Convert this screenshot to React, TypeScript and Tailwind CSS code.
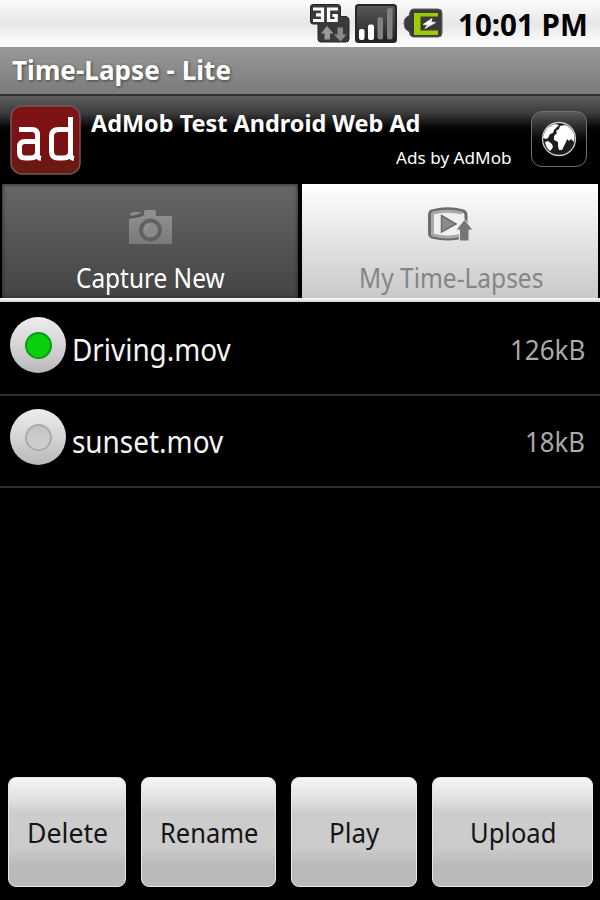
import { useLayoutEffect, useRef, useState } from "react";

type FitTextProps = {
  text: string;
  width: number;
  className?: string;
};

// Condenses a single line of text so that it fills the given width
function FitText({ text, width, className = "" }: FitTextProps) {
  const ref = useRef<HTMLSpanElement>(null);
  const [scale, setScale] = useState(1);

  useLayoutEffect(() => {
    if (ref.current) setScale(width / ref.current.offsetWidth);
  }, [text, width]);

  return (
    <span className={`flex shrink-0 ${className}`} style={{ width }}>
      <span
        ref={ref}
        className="inline-block shrink-0 origin-left whitespace-nowrap"
        style={{ transform: `scaleX(${scale})` }}
      >
        {text}
      </span>
    </span>
  );
}

const files = [
  { name: "Driving.mov", nameWidth: 159, size: "126kB", sizeWidth: 75, selected: true },
  { name: "sunset.mov", nameWidth: 151, size: "18kB", sizeWidth: 60, selected: false },
];

const actions = [
  { label: "Delete", textWidth: 81, box: "w-[118px]" },
  { label: "Rename", textWidth: 98, box: "w-[135px]" },
  { label: "Play", textWidth: 50, box: "w-[126px]" },
  { label: "Upload", textWidth: 86, box: "w-[161px]" },
];

function NetworkIcon() {
  return (
    <svg width="40" height="40" viewBox="0 0 40 40">
      <path
        d="M3 0.500H28Q30 0.500 30.500 3V12.500H36Q39 13 39 16V35Q39 38 36 38H11Q8 38 8 35V20H3Q0.500 20 0.500 17V3Q0.500 0.500 3 0.500Z"
        fill="#3a3a3a"
        stroke="#262626"
      />
      <path d="M3 5H12.500V16.500H3M6 10.800H12" fill="none" stroke="#fff" strokeWidth="3.200" />
      <path d="M28 5H18.500V16.500H26.200V11.500H22.500" fill="none" stroke="#fff" strokeWidth="3.200" />
      <path d="M17 22L23.500 29.500H20V35.500H14.500V29.500H11Z" fill="#9a9a9a" />
      <path d="M30.500 37.500L24 30.500H27.500V23.500H33V30.500H36.500Z" fill="#8a8a8a" />
    </svg>
  );
}

function SignalIcon() {
  return (
    <svg width="42" height="39" viewBox="0 0 42 39">
      <defs>
        <linearGradient id="signal" x1="0" y1="0" x2="0" y2="1">
          <stop offset="0" stopColor="#5a5a5a" />
          <stop offset="1" stopColor="#202020" />
        </linearGradient>
      </defs>
      <rect x="1" y="1" width="40" height="37" rx="2.500" fill="url(#signal)" stroke="#262626" strokeWidth="2" />
      <rect x="4" y="25" width="5.500" height="11" rx="2" fill="#fff" />
      <rect x="13" y="20.500" width="6" height="15.500" rx="2" fill="#fff" />
      <rect x="22.500" y="13" width="5.500" height="22.500" rx="2.500" fill="#818181" />
      <rect x="32" y="4" width="5.500" height="31.500" rx="2.500" fill="#818181" />
    </svg>
  );
}

function BatteryIcon() {
  return (
    <svg width="41" height="31" viewBox="0 0 41 31">
      <path
        d="M10 1H35Q39 1 39 5V25Q39 29 35 29H10Q7 29 6 23.500L3.500 22Q1 20 1 15Q1 11 3.500 9L6 8Q7 1 10 1Z"
        fill="#3a3a3a"
        stroke="#606060"
      />
      <path d="M11 5H35V8.500H17.500V22.500H35V27H11Z" fill="#9bcc08" />
      <path d="M29 10.500L20 16.500L24.500 17L22 20.500L32.500 14.500L28 14Z" fill="#fff" stroke="#ddd" strokeWidth="1" />
    </svg>
  );
}

function AdLogo() {
  return (
    <svg width="72" height="72" viewBox="0 0 72 72">
      <defs>
        <linearGradient id="adred" x1="0" y1="0" x2="0" y2="1">
          <stop offset="0" stopColor="#7c1416" />
          <stop offset="0.500" stopColor="#7d1114" />
          <stop offset="0.800" stopColor="#701414" />
          <stop offset="1" stopColor="#642012" />
        </linearGradient>
      </defs>
      <rect x="1" y="1" width="69" height="68" rx="11" fill="url(#adred)" stroke="#77554f" strokeWidth="1.500" />
      <g fill="none" stroke="#fff" strokeWidth="5">
        <path d="M9 24.500H22Q27.500 24.500 27.500 30V50Q27.500 53 31 53.500M27.500 36.500H15Q9.500 36.500 9.500 42V47.500Q9.500 53 15 53H20Q27.500 53 27.500 47" />
        <path d="M60.500 12V50Q60.500 53 64 53.500M60.500 24.500H49Q41.500 24.500 41.500 31V46.500Q41.500 53 48 53H53Q60.500 53 60.500 47" />
      </g>
    </svg>
  );
}

function GlobeIcon() {
  return (
    <svg width="36" height="36" viewBox="0 0 36 36">
      <circle cx="18" cy="18" r="16.500" fill="#1c1c1c" stroke="#ccc" strokeWidth="1.300" />
      <path d="M3 13Q6 5 14 3L18 4L15 7L13 9L12 12L9 13L7 17L5 18L2 17Z" fill="#fff" />
      <path d="M4 21L7 20L11 23L12 26L10 29L9 30Q5 27 4 21Z" fill="#fff" />
      <path
        d="M19 5L24 4Q30 6 33 13Q34 17 33 21L30 18L28 20L26 18L25 21L23 25L21 29H18L17 25V21L13 19V15L16 12L15 10L18 8Z"
        fill="#fff"
      />
    </svg>
  );
}

function CameraIcon() {
  return (
    <svg width="46" height="38" viewBox="0 0 46 38">
      <defs>
        <linearGradient id="camera" x1="0" y1="0" x2="0" y2="1">
          <stop offset="0" stopColor="#929292" />
          <stop offset="1" stopColor="#7a7a7a" />
        </linearGradient>
      </defs>
      <path d="M1 10L12 8L16 6.500V3Q16 1 18 1H26Q28 1 28 3V7H44V35H1Z" fill="url(#camera)" />
      <path d="M2 5L5 3H13L11 5L3 7Z" fill="#8c8c8c" />
      <path d="M2 8.500L13 6.500" stroke="#555" strokeWidth="1.300" />
      <circle cx="22.500" cy="21" r="9.500" fill="#8a8a8a" stroke="#606060" strokeWidth="3.800" />
      <path d="M17.500 22A5 5 0 0 1 22.500 16" fill="none" stroke="#969696" strokeWidth="2" />
    </svg>
  );
}

function UploadVideoIcon() {
  return (
    <svg width="46" height="37" viewBox="0 0 46 37">
      <path
        d="M4 5Q20 0.500 35 5Q38 6 38 9V27Q38 30 35 31Q20 35 4 31Q1.500 30 1.500 27V9Q1.500 6 4 5Z"
        fill="#f0f0f0"
        stroke="#6c6c6c"
        strokeWidth="3"
      />
      <path d="M34 7Q19 3.500 5 7Q4.500 8 4.500 10V26Q4.500 28 5 29Q19 32.500 32 29.500" fill="none" stroke="#aaa" strokeWidth="3" />
      <path d="M13.500 9.500L28 18L13.500 26Z" fill="#8c8c8c" stroke="#6c6c6c" strokeWidth="1.500" />
      <path d="M36.500 13.500L45 24H41V35H31.500V24H28Z" fill="#757575" stroke="#e8e8e8" />
    </svg>
  );
}

function Radio({ selected }: { selected: boolean }) {
  return (
    <span className="flex size-14 items-center justify-center rounded-full bg-linear-to-b from-[#ededed] via-[#d5d5d5] to-[#b8b8b8]">
      {selected ? (
        <span className="size-[27px] rounded-full border-2 border-[#0a9a14] bg-[#08d00d]" />
      ) : (
        <span className="size-[27px] rounded-full border-2 border-[#ababab] bg-linear-to-b from-[#c4c4c4] to-[#d0d0d0]" />
      )}
    </span>
  );
}

export default function App() {
  return (
    <div
      className="flex h-[900px] w-[600px] flex-col overflow-hidden bg-black"
      style={{ fontFamily: '"Noto Sans", "Open Sans", sans-serif' }}
    >
      {/* Status bar */}
      <header className="flex h-[47px] shrink-0 items-start justify-end bg-linear-to-b from-[#fbfbfb] via-[#e7e7e7] to-[#fff] pr-3">
        <div className="mt-1 mr-[5px]">
          <NetworkIcon />
        </div>
        <div className="mt-1 mr-[6px]">
          <SignalIcon />
        </div>
        <div className="mt-2 mr-[14px]">
          <BatteryIcon />
        </div>
        <FitText text="10:01 PM" width={130} className="mt-1 text-[30px] leading-[42px] font-bold text-black" />
      </header>

      <div className="flex h-[49px] shrink-0 items-start border-b-2 border-[#303030] bg-linear-to-b from-[#999] to-[#7b7b7b] pl-3">
        <FitText
          text="Time-Lapse - Lite"
          width={219}
          className="mt-px text-[26px] leading-[44px] font-bold text-white [text-shadow:1px_1px_3px_#444]"
        />
      </div>

      {/* Ad banner */}
      <section className="flex h-[88px] shrink-0 bg-linear-to-b from-[#606060] via-[#3a3a3a] via-20% to-black to-45% pt-[9px] pl-[10px]">
        <AdLogo />
        <div className="flex w-[430px] flex-col pl-[9px] text-white">
          <FitText text="AdMob Test Android Web Ad" width={329} className="mt-0.5 text-[23px] leading-8 font-bold" />
          <FitText text="Ads by AdMob" width={116} className="mt-[7px] ml-[305px] text-[17px] leading-6" />
        </div>
        <div className="mt-1.5 ml-[19px] flex size-14 items-center justify-center rounded-[11px] border border-[#707070] bg-linear-to-b from-[#5b5b5b] to-black to-70%">
          <GlobeIcon />
        </div>
      </section>

      {/* Tabs */}
      <nav className="flex h-[114px] shrink-0 gap-1 px-0.5">
        <div className="flex w-[296px] flex-col items-center bg-linear-to-b from-[#676767] to-[#444] pt-[25px] pl-px text-white shadow-[inset_0_0_4px_#222]">
          <CameraIcon />
          <FitText text="Capture New" width={149} className="mt-[13px] text-[27px] leading-[36px]" />
        </div>
        <div className="flex w-[296px] flex-col items-center bg-linear-to-b from-white via-[#dedede] via-60% to-[#c9c9c9] pt-[22px] pl-px text-[#858585]">
          <UploadVideoIcon />
          <FitText text="My Time-Lapses" width={184} className="mt-[17px] text-[27px] leading-[36px]" />
        </div>
      </nav>
      <div className="h-1 shrink-0 bg-linear-to-b from-white to-[#d0d0d0]" />

      {/* Recorded files */}
      <ul className="flex flex-col pt-0.5">
        {files.map((file) => (
          <li key={file.name} className="flex h-[92px] items-start border-b-2 border-[#2d2d2d] pr-[15px] pl-[10px]">
            <div className="mt-[13px]">
              <Radio selected={file.selected} />
            </div>
            <FitText text={file.name} width={file.nameWidth} className="mt-[23px] ml-[6px] text-[30.5px] leading-[44px] text-[#f5f5f5]" />
            <FitText text={file.size} width={file.sizeWidth} className="mt-6 ml-auto text-[27px] leading-[44px] text-[#aaa]" />
          </li>
        ))}
      </ul>

      <footer className="mt-auto mb-[13px] flex justify-between pr-[7px] pl-2">
        {actions.map((action) => (
          <button
            key={action.label}
            className={`flex h-[110px] items-center justify-center rounded-lg border border-[#e6e6e6] bg-[linear-gradient(#f5f5f5,#dedede_22%,#cdcdcd_32%,#cbcbcb_65%,#b9b9b9_82%,#bababa)] pt-0.5 text-[27px] leading-9 text-[#151515] ${action.box}`}
          >
            <FitText text={action.label} width={action.textWidth} />
          </button>
        ))}
      </footer>
    </div>
  );
}
